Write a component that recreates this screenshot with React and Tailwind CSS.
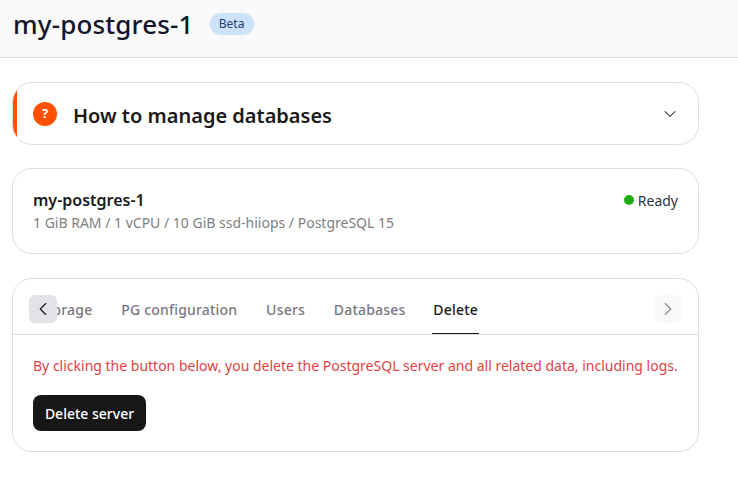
import { ChevronDown, ChevronLeft, ChevronRight } from "lucide-react";

const tabs = ["Storage", "PG configuration", "Users", "Databases"];

export default function App() {
  return (
    <div className="w-[738px] h-[478px] overflow-hidden bg-white font-['Noto_Sans',sans-serif]">
      <header className="h-[58px] bg-[#f9f9f9] border-b border-[#dcdcdc] flex items-start pl-[13px] pt-[4px]">
        <h1 className="text-[26px] leading-[40px] tracking-[0.15px] font-medium text-[#14142b]">my-postgres-1</h1>
        <span className="ml-[16px] mt-[9px] h-[22px] w-[44px] rounded-full bg-[#cfe2fb] text-[#1d3f72] text-[12px] leading-[22px] text-center">Beta</span>
      </header>

      <main className="w-[687px] ml-[12px] pt-[24px] flex flex-col">
        <section className="h-[63px] rounded-[20px] border border-[#dedede] overflow-hidden bg-white flex items-center">
          <div className="w-[4px] h-full bg-[#ff5000] shrink-0" />
          <div className="ml-[16px] w-[24px] h-[24px] rounded-full bg-[#ff5000] text-white text-[13px] font-bold flex items-center justify-center">?</div>
          <h2 className="ml-[16px] pt-[4px] text-[20px] font-semibold text-[#1a1a1a]">How to manage databases</h2>
          <ChevronDown className="ml-auto mr-[18px] w-[20px] h-[20px] text-[#1a1a1a]" strokeWidth={1.25} />
        </section>

        <section className="mt-[23px] h-[86px] rounded-[20px] border border-[#dedede] px-[20px] pt-[19px] flex justify-between">
          <div>
            <div className="text-[16px] leading-[24px] font-semibold text-[#1a1a1a]">my-postgres-1</div>
            <div className="text-[14px] leading-[22px] text-[#808080]">1 GiB RAM / 1 vCPU / 10 GiB ssd-hiiops / PostgreSQL 15</div>
          </div>
          <div className="flex items-center gap-[4px] h-[24px] text-[14px] text-[#333333]">
            <span className="w-[10px] h-[10px] rounded-full bg-[#22ad0e]" />
            Ready
          </div>
        </section>

        <section className="mt-[24px] h-[174px] rounded-[20px] border border-[#dedede] overflow-hidden">
          <div className="relative h-[56px] border-b border-[#dedede] overflow-hidden">
            <div className="flex gap-[28.8px] pl-[26px] h-full text-[14px] tracking-[0.2px] font-medium text-[#77777f]">
              {tabs.map((t) => (
                <div key={t} className="pt-[20px] whitespace-nowrap">{t}</div>
              ))}
              <div className="-ml-[2px] px-[1px] pt-[20px] h-[56px] text-[#1a1a1a] border-b-2 border-[#1a1a1a]">Delete</div>
            </div>
            <button className="absolute left-[16px] top-[16px] w-[28px] h-[28px] rounded-[6px] bg-[#e2e2e7] flex items-center justify-center text-[#1a1a1a]">
              <ChevronLeft className="w-[22px] h-[22px]" strokeWidth={1.25} />
            </button>
            <button className="absolute right-[16px] top-[16px] w-[28px] h-[28px] rounded-[6px] bg-[#f8f8f8] flex items-center justify-center text-[#8a8a8a]">
              <ChevronRight className="w-[22px] h-[22px]" strokeWidth={1.25} />
            </button>
          </div>
          <div className="px-[20px] pt-[20px]">
            <p className="text-[14px] leading-[22px] text-[#df3f3f]">By clicking the button below, you delete the PostgreSQL server and all related data, including logs.</p>
            <button className="mt-[18px] h-[36px] w-[113px] rounded-[8px] bg-[#171717] text-white text-[14px] font-medium">Delete server</button>
          </div>
        </section>
      </main>
    </div>
  );
}
